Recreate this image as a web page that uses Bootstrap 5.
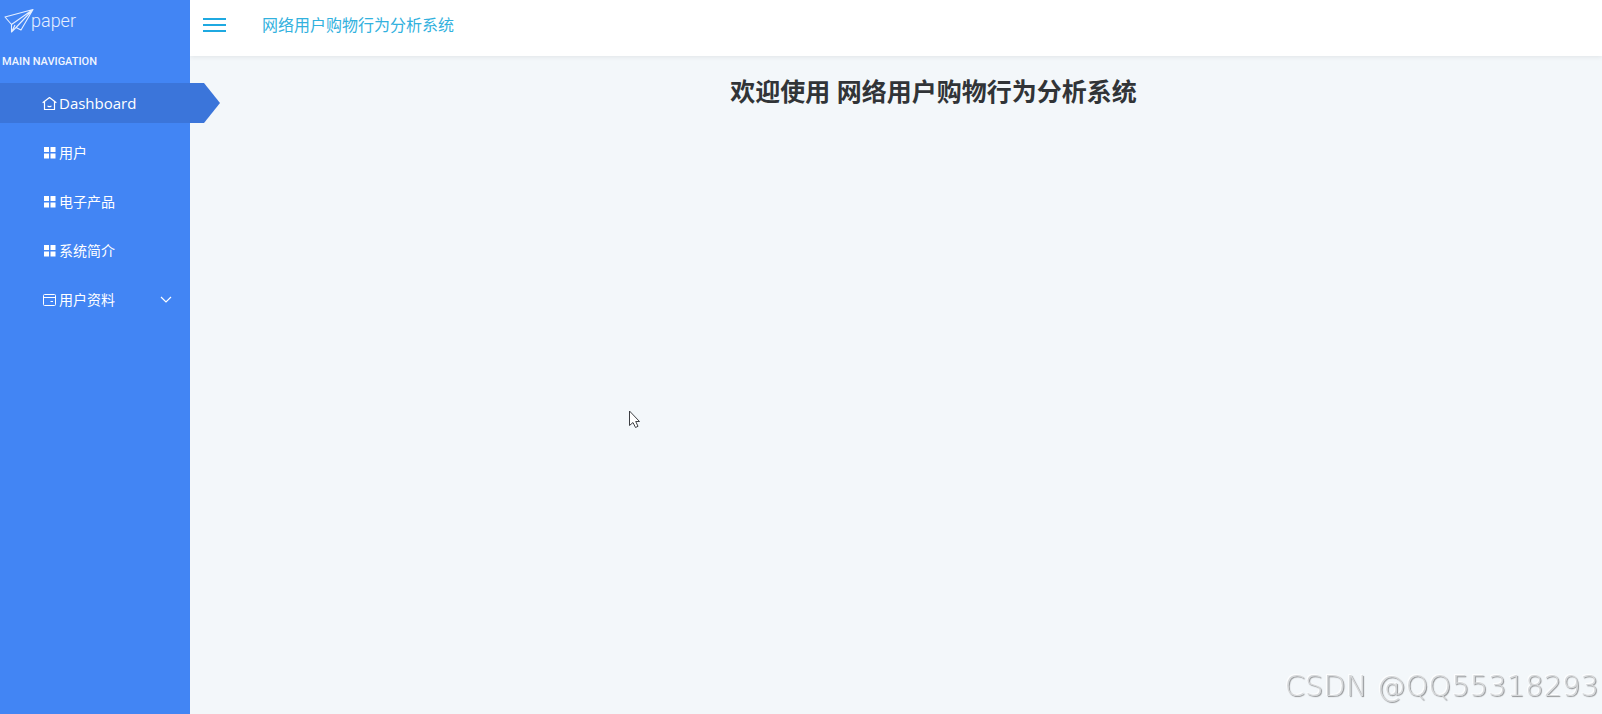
<!DOCTYPE html>
<html lang="zh-CN">
<head>
<meta charset="utf-8">
<meta name="viewport" content="width=device-width, initial-scale=1">
<title>网络用户购物行为分析系统</title>
<link rel="stylesheet" href="https://cdn.jsdelivr.net/npm/bootstrap@5.3.0/dist/css/bootstrap.min.css">
<style>
body { background: #f3f7fa; font-family: "Open Sans", "Noto Sans CJK SC", sans-serif; color: #313437; }
.sidebar { width: 190px; background: #4285f4; z-index: 2; }
.brand { height: 42px; padding: 0 4px; font: 300 18px/40px Roboto, sans-serif; color: #e6efff; }
.brand svg { overflow: visible; }
.nav-title { font: 500 11px/16px Roboto, sans-serif; color: #f0f5ff; padding: 12px 2px 13px; }
.side-link { height: 40px; padding: 0 18px 0 42px; gap: 2px; font-size: 14px; color: #fff; text-decoration: none; margin-bottom: 9px; }
.side-link.active { width: 220px; font-size: 15px; background: #3b75da; clip-path: polygon(0 0, 204px 0, 100% 50%, 204px 100%, 0 100%); }
.topbar { height: 56px; background: #fff; box-shadow: 0 1px 5px rgba(0,0,0,.08); padding: 0 12px 7px; gap: 36px; }
.topbar a { font-size: 16px; color: #32b1de; text-decoration: none; }
.welcome { font-size: 25px; line-height: 36px; font-weight: 700; margin: 17px 0 0; padding-left: 75px; }
.watermark { right: 3px; bottom: 8px; font: 200 29px/40px "DejaVu Sans Light", "DejaVu Sans", sans-serif; color: #d6d8da; text-shadow: 1px 1px 1px #8f9193, -1px -1px 1px #fff; }
.pointer { left: 628px; top: 410px; }
</style>
</head>
<body>
<div class="d-flex min-vh-100">
  <aside class="sidebar flex-shrink-0 position-relative">
    <a href="#" class="brand d-flex align-items-center text-decoration-none">
      <svg width="27" height="26" viewBox="0 0 27 26" fill="none" stroke="currentColor" stroke-width="1.1" stroke-linejoin="round"><path d="M1 9L29 1.500L17 22L12 19.500L7.500 24V16.500ZM7.500 16.500L29 1.500L12 19.500M7.500 24L11 17"/></svg><span>paper</span>
    </a>
    <div class="nav-title">MAIN NAVIGATION</div>
    <nav class="d-flex flex-column">
      <a href="#" class="side-link active d-flex align-items-center" aria-current="page">
        <svg width="15" height="15" viewBox="0 0 15 15" fill="none" stroke="currentColor" stroke-width="1.2" stroke-linejoin="round" stroke-linecap="round"><path d="M1 6.500L7.500 1.500L14 6.500M2.500 5.500V13.500H12.500V5.500M6 10.200Q7.500 11.200 9 10.200"/></svg><span>Dashboard</span></a>
      <a href="#" class="side-link d-flex align-items-center"><svg width="15" height="15" viewBox="0 0 15 15" fill="currentColor"><path d="M2 2h5v5H2zM8.500 2h5v5h-5zM2 8.500h5v5H2zM8.500 8.500h5v5h-5z"/></svg><span>用户</span></a>
      <a href="#" class="side-link d-flex align-items-center"><svg width="15" height="15" viewBox="0 0 15 15" fill="currentColor"><path d="M2 2h5v5H2zM8.500 2h5v5h-5zM2 8.500h5v5H2zM8.500 8.500h5v5h-5z"/></svg><span>电子产品</span></a>
      <a href="#" class="side-link d-flex align-items-center"><svg width="15" height="15" viewBox="0 0 15 15" fill="currentColor"><path d="M2 2h5v5H2zM8.500 2h5v5h-5zM2 8.500h5v5H2zM8.500 8.500h5v5h-5z"/></svg><span>系统简介</span></a>
      <a href="#" class="side-link d-flex align-items-center"><svg width="15" height="15" viewBox="0 0 15 15" fill="none" stroke="currentColor"><rect x="1.500" y="2.500" width="12" height="11" rx="1"/><path d="M1.500 5.500H13.500M8.500 9.500H11"/></svg><span>用户资料</span>
        <svg class="ms-auto" width="12" height="12" viewBox="0 0 12 12" fill="none" stroke="currentColor" stroke-width="1.200"><path d="M1 4L6 9L11 4"/></svg></a>
    </nav>
  </aside>
  <div class="flex-grow-1">
    <header class="topbar d-flex align-items-center">
      <button type="button" class="btn p-0 border-0 d-flex" aria-label="Toggle navigation"><svg width="24" height="18" viewBox="0 0 24 18" stroke="#1fa9e1" stroke-width="2"><path d="M1 3H24M1 9H24M1 15H24"/></svg></button>
      <a href="#">网络用户购物行为分析系统</a>
    </header>
    <main><h1 class="welcome text-center">欢迎使用 网络用户购物行为分析系统</h1></main>
  </div>
</div>
<div class="watermark position-fixed">CSDN @QQ55318293</div>
<svg class="pointer position-fixed" width="14" height="19" viewBox="0 0 14 19" fill="#fff" stroke="#3c3e42"><path d="M1.500 1V15.500L5 12.500L7.500 17.500L10 16.300L7.700 11.500H11.500Z"/></svg>
<script src="https://cdn.jsdelivr.net/npm/bootstrap@5.3.0/dist/js/bootstrap.bundle.min.js"></script>
</body>
</html>
